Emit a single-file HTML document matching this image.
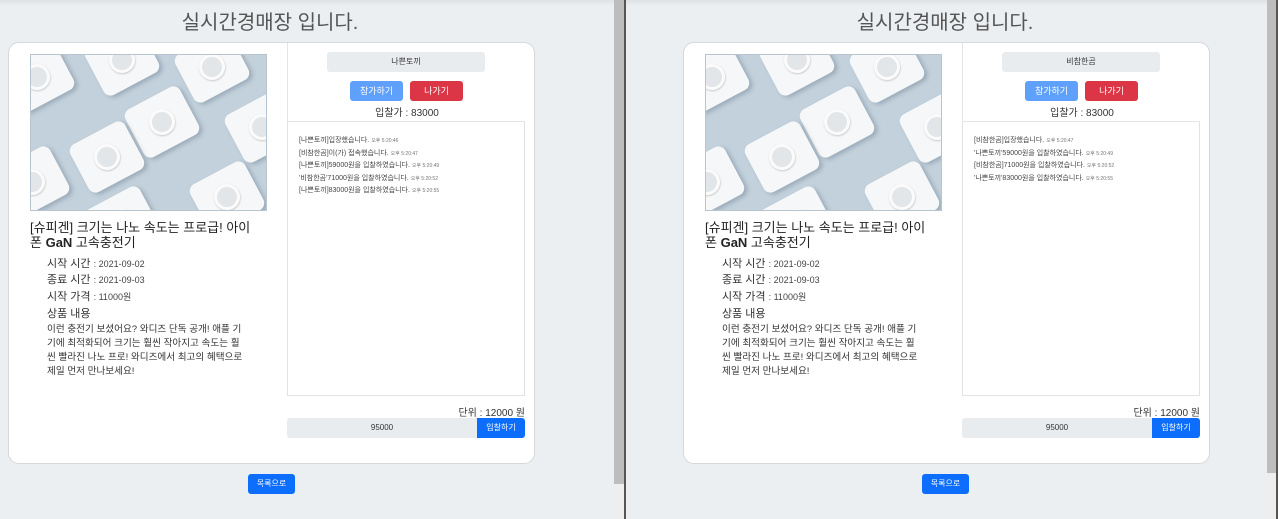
<!DOCTYPE html>
<html><head><meta charset="utf-8"><style>
*{box-sizing:border-box;margin:0;padding:0}
body{width:1278px;height:519px;overflow:hidden;background:#eceff1;font-family:"Liberation Sans","Noto Sans CJK KR",sans-serif;color:#222;position:relative}
.pane{position:absolute;top:0;height:519px;background:#eceff1;overflow:hidden}
.pane .shadow{position:absolute;left:0;right:0;top:0;height:6px;background:linear-gradient(#dfe2e4,#eceff1)}
.title{position:absolute;left:0;width:540px;top:6px;text-align:center;font-size:20px;color:#555}
.card{position:absolute;left:8px;top:42px;width:527px;height:422px;background:#fff;border:1px solid #d6d8da;border-radius:11px}
.a{position:absolute}
.img{left:21px;top:11px;width:237px;height:157px;background:#c3d1dc;overflow:hidden;border:1px solid #b8c4ce}
.sq{position:absolute;width:62px;height:54px;background:#f6f7f8;border-radius:8px;transform:rotate(-28deg);box-shadow:2px 3px 4px rgba(80,100,120,.35)}
.sq::after{content:"";position:absolute;left:18px;top:14px;width:26px;height:26px;border-radius:50%;background:#e3e6e8;box-shadow:inset 0 0 0 3px #fbfbfb,0 1px 2px rgba(0,0,0,.2)}
.ptitle{left:21px;top:177px;width:230px;font-size:13px;line-height:15px;color:#222;word-break:break-all}
.lab{left:38px;font-size:11px;color:#333}
.lab small{font-size:9px;color:#444}
.desc{left:38px;top:280px;width:198px;font-size:9.6px;line-height:14px;color:#333;word-break:break-all}
.rt{left:278px;top:0;width:238px;height:79px;border-bottom:1px solid #e5e5e5;border-left:1px solid #e5e5e5}
.name{left:39px;top:9px;width:158px;height:20px;background:#e9ecef;border-radius:3px;font-size:8px;text-align:center;line-height:20px;color:#333}
.btn{height:20px;border-radius:3px;color:#fff;font-size:9px;text-align:center;line-height:20px}
.chat{left:278px;top:79px;width:238px;height:274px;border:1px solid #e2e2e2;border-top:none;padding:13px 11px;font-size:7px;line-height:12.5px;color:#444}
.chat i{font-style:normal;font-size:5px;color:#777}
.inp{left:278px;top:375px;width:190px;height:20px;background:#e9ecef;border-radius:3px 0 0 3px;font-size:8px;text-align:center;line-height:20px;color:#333}
</style></head><body>

<div class="pane" style="left:0;width:614px">
<div class="shadow"></div>
<div class="title">실시간경매장 입니다.</div>
<div class="card">
 <div class="a img">
  <div class="sq" style="left:-25px;top:-5px"></div><div class="sq" style="left:60px;top:-22px"></div><div class="sq" style="left:150px;top:-15px"></div>
  <div class="sq" style="left:100px;top:40px"></div><div class="sq" style="left:200px;top:45px"></div>
  <div class="sq" style="left:-30px;top:100px"></div><div class="sq" style="left:45px;top:75px"></div><div class="sq" style="left:165px;top:115px"></div>
  <div class="sq" style="left:60px;top:140px"></div>
 </div>
 <div class="a ptitle">[슈피겐] 크기는 나노 속도는 프로급! 아이폰 <b style="font-weight:600">GaN</b> 고속충전기</div>
 <div class="a lab" style="top:212px">시작 시간 <small>: 2021-09-02</small></div>
 <div class="a lab" style="top:228px">종료 시간 <small>: 2021-09-03</small></div>
 <div class="a lab" style="top:245px">시작 가격 <small>: 11000원</small></div>
 <div class="a lab" style="top:262px">상품 내용</div>
 <div class="a desc">이런 충전기 보셨어요? 와디즈 단독 공개! 애플 기기에 최적화되어 크기는 훨씬 작아지고 속도는 훨씬 빨라진 나노 프로! 와디즈에서 최고의 혜택으로 제일 먼저 만나보세요!</div>
 <div class="a rt">
  <div class="a name">나쁜토끼</div>
  <div class="a btn" style="left:62px;top:38px;width:53px;background:#5fa0fb">참가하기</div>
  <div class="a btn" style="left:122px;top:38px;width:53px;background:#dc3545">나가기</div>
  <div class="a" style="left:0;width:238px;top:61px;text-align:center;font-size:10px;color:#333">입찰가 : 83000</div>
 </div>
 <div class="a chat">[나쁜토끼]입장했습니다. <i>오후 5:20:46</i><br>[비참한곰]이(가) 접속했습니다. <i>오후 5:20:47</i><br>[나쁜토끼]59000원을 입찰하였습니다. <i>오후 5:20:49</i><br>'비참한곰'71000원을 입찰하였습니다. <i>오후 5:20:52</i><br>[나쁜토끼]83000원을 입찰하였습니다. <i>오후 5:20:55</i></div>
 <div class="a" style="left:278px;width:238px;top:361px;text-align:right;font-size:10px;color:#333">단위 : 12000 원</div>
 <div class="a inp">95000</div>
 <div class="a btn" style="left:468px;top:375px;width:48px;background:#0d6efd;border-radius:0 3px 3px 0;font-size:8px">입찰하기</div>
</div>
<div class="a btn" style="left:248px;top:474px;width:47px;background:#0d6efd;font-size:8px">목록으로</div>
</div>
<div style="position:absolute;left:614px;top:0;width:10px;height:484px;background:#bdbdbd"></div>
<div style="position:absolute;left:614px;top:484px;width:10px;height:35px;background:#eee"></div>
<div style="position:absolute;left:624px;top:0;width:2px;height:519px;background:#555"></div>

<div class="pane" style="left:626px;width:641px">
<div class="shadow"></div>
<div class="title" style="left:49px">실시간경매장 입니다.</div>
<div class="card" style="left:57px">
 <div class="a img">
  <div class="sq" style="left:-25px;top:-5px"></div><div class="sq" style="left:60px;top:-22px"></div><div class="sq" style="left:150px;top:-15px"></div>
  <div class="sq" style="left:100px;top:40px"></div><div class="sq" style="left:200px;top:45px"></div>
  <div class="sq" style="left:-30px;top:100px"></div><div class="sq" style="left:45px;top:75px"></div><div class="sq" style="left:165px;top:115px"></div>
  <div class="sq" style="left:60px;top:140px"></div>
 </div>
 <div class="a ptitle">[슈피겐] 크기는 나노 속도는 프로급! 아이폰 <b style="font-weight:600">GaN</b> 고속충전기</div>
 <div class="a lab" style="top:212px">시작 시간 <small>: 2021-09-02</small></div>
 <div class="a lab" style="top:228px">종료 시간 <small>: 2021-09-03</small></div>
 <div class="a lab" style="top:245px">시작 가격 <small>: 11000원</small></div>
 <div class="a lab" style="top:262px">상품 내용</div>
 <div class="a desc">이런 충전기 보셨어요? 와디즈 단독 공개! 애플 기기에 최적화되어 크기는 훨씬 작아지고 속도는 훨씬 빨라진 나노 프로! 와디즈에서 최고의 혜택으로 제일 먼저 만나보세요!</div>
 <div class="a rt">
  <div class="a name">비참한곰</div>
  <div class="a btn" style="left:62px;top:38px;width:53px;background:#5fa0fb">참가하기</div>
  <div class="a btn" style="left:122px;top:38px;width:53px;background:#dc3545">나가기</div>
  <div class="a" style="left:0;width:238px;top:61px;text-align:center;font-size:10px;color:#333">입찰가 : 83000</div>
 </div>
 <div class="a chat">[비참한곰]입장했습니다. <i>오후 5:20:47</i><br>'나쁜토끼'59000원을 입찰하였습니다. <i>오후 5:20:49</i><br>[비참한곰]71000원을 입찰하였습니다. <i>오후 5:20:52</i><br>'나쁜토끼'83000원을 입찰하였습니다. <i>오후 5:20:55</i></div>
 <div class="a" style="left:278px;width:238px;top:361px;text-align:right;font-size:10px;color:#333">단위 : 12000 원</div>
 <div class="a inp">95000</div>
 <div class="a btn" style="left:468px;top:375px;width:48px;background:#0d6efd;border-radius:0 3px 3px 0;font-size:8px">입찰하기</div>
</div>
<div class="a btn" style="left:296px;top:474px;width:47px;background:#0d6efd;font-size:8px">목록으로</div>
</div>
<div style="position:absolute;left:1267px;top:0;width:9px;height:473px;background:#bdbdbd"></div>
<div style="position:absolute;left:1267px;top:473px;width:9px;height:46px;background:#eee"></div>
<div style="position:absolute;left:1276px;top:0;width:2px;height:519px;background:#555"></div>
</body></html>
